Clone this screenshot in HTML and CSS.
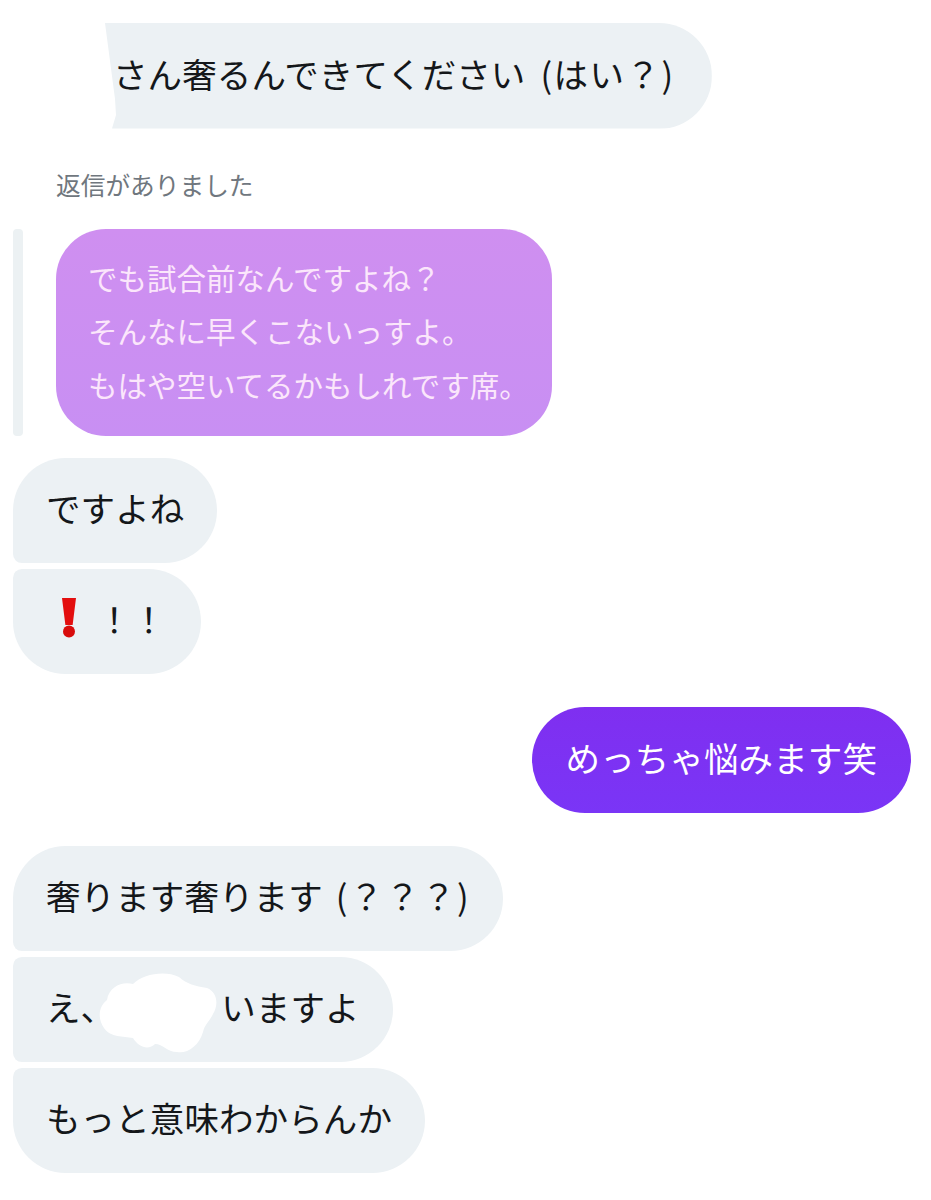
FILE: index.html
```html
<!DOCTYPE html>
<html lang="ja">
<head>
    <meta charset="UTF-8">
    <meta name="viewport" content="width=device-width, initial-scale=1.0">
    <title>メッセージ</title>
    <link rel="stylesheet" href="styles.css">
</head>
<body>
    <main class="chat">
        <div class="bubble cut">さん奢るんできてください<span class="aside">(はい？)</span></div>

        <p class="reply-label">返信がありました</p>
        <div class="reply">
            <div class="reply-bar"></div>
            <div class="reply-body">
                でも試合前なんですよね？<br>
                そんなに早くこないっすよ。<br>
                もはや空いてるかもしれです席。
            </div>
        </div>

        <div class="group">
            <div class="bubble first">ですよね</div>
            <div class="bubble last">
                <svg class="mark" viewBox="0 0 42 40" aria-hidden="true">
                    <path d="M14 0H28L24.600 27H17.400Z" fill="#e30e0e"/>
                    <circle cx="21" cy="33.500" r="6" fill="#d80c0c"/>
                </svg><span class="shout">！！</span>
            </div>
        </div>

        <div class="bubble mine">めっちゃ悩みます笑</div>

        <div class="group">
            <div class="bubble first">奢ります奢ります<span class="aside near">(？？？)</span></div>
            <div class="bubble middle">え、<span class="hidden-name">
                <svg viewBox="0 0 120 82" aria-hidden="true">
                    <path d="M8 28C10 14 24 9 34 12C44 2 66 -2 80 5C88 12 96 14 108 16C118 20 120 32 114 42C110 50 106 52 104 60C100 74 88 82 78 80C68 80 64 72 56 72C50 78 40 76 34 66C24 64 12 66 5 56C-2 46 0 34 8 28Z" fill="#fff"/>
                </svg>
            </span>いますよ</div>
            <div class="bubble last">もっと意味わからんか</div>
        </div>
    </main>
</body>
</html>
```

FILE: styles.css
```css
*{
    margin: 0px;
    padding: 0px;
    box-sizing: border-box;
}

body{
    background-color: #fff;
    color: #14171a;
    font-family: "Noto Sans CJK JP", "Noto Sans", sans-serif;
}

.chat{
    display: flex;
    flex-direction: column;
    align-items: flex-start;
    padding: 23px 20px 26px 13px;
}

/* 吹き出し共通 */
.bubble{
    display: flex;
    align-items: center;
    height: 105.500px;
    padding: 0px 33px 6px;
    border-radius: 53px;
    background-color: #ecf1f4;
    font-size: 34.500px;
    letter-spacing: 0.100px;
    line-height: 1;
    white-space: nowrap;
}

/* 続きの吹き出しは左側の角だけ小さくする */
.first{
    border-bottom-left-radius: 9px;
}

.middle{
    border-top-left-radius: 9px;
    border-bottom-left-radius: 9px;
}

.last{
    border-top-left-radius: 9px;
}

.group{
    display: flex;
    flex-direction: column;
    align-items: flex-start;
    gap: 5.500px;
}

/* 括弧書きは少し離して字間も広げる */
.aside{
    margin-left: 15px;
    letter-spacing: 1.500px;
}

.near{
    margin-left: 13px;
}

.shout{
    margin-right: 2px;
}

/* 上の切れた吹き出し */
.cut{
    margin-left: 92px;
    padding: 0px 37px 6px 8px;
    border-radius: 0px 53px 53px 0px;
    clip-path: polygon(0px 0px, 100% 0px, 100% 100%, 7px 100%, 11px 92px, 10px 76px);
}

.reply-label{
    margin: 42px 0px 0px 43px;
    color: #70777e;
    font-size: 24.700px;
    line-height: 26px;
}

.reply{
    display: flex;
    gap: 33px;
    margin: 32px 0px 22px;
}

.reply-bar{
    width: 10px;
    border-radius: 4px;
    background-color: #ecf1f3;
}

.reply-body{
    width: 496px;
    height: 207px;
    padding: 22px 0px 0px 32px;
    border-radius: 50px;
    background: linear-gradient(#cf8ff0, #c88ff3);
    color: #fbe6fb;
    font-size: 29.500px;
    line-height: 53.500px;
    white-space: nowrap;
}

.mark{
    width: 42px;
    height: 40px;
    margin: 0px 7px 0px 2px;
}

.mine{
    align-self: flex-end;
    margin: 33px 0px 33px;
    padding-right: 34px;
    padding-left: 34px;
    background: linear-gradient(#7f2ff0, #7a35f6);
    color: #fff;
}

/* 名前を白く塗りつぶした部分 */
.hidden-name{
    position: relative;
    display: inline-block;
    width: 106px;
    height: 34px;
}

.hidden-name svg{
    position: absolute;
    left: -16px;
    top: -17px;
    width: 120px;
    height: 82px;
}
```
